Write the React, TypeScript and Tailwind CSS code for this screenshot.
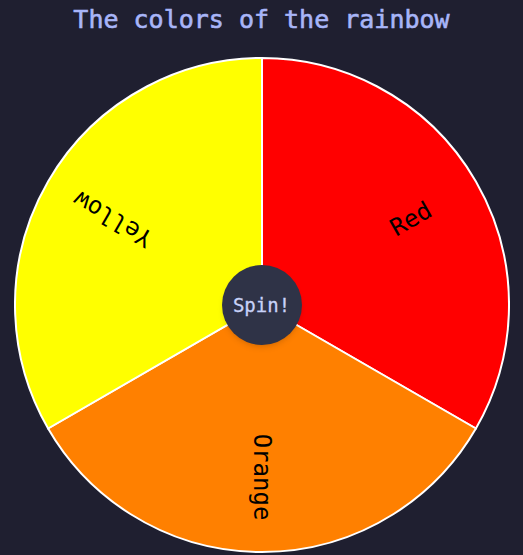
import React from "react";

type Slice = { label: string; color: string };

const slices: Slice[] = [
  { label: "Red", color: "#ff0000" },
  { label: "Orange", color: "#ff8000" },
  { label: "Yellow", color: "#ffff00" },
];

const SIZE = 496;
const C = SIZE / 2;
const R = 247;

function point(deg: number, r: number) {
  const a = (deg * Math.PI) / 180;
  return [C + r * Math.sin(a), C - r * Math.cos(a)];
}

function Wheel() {
  const step = 360 / slices.length;
  return (
    <svg width={SIZE} height={SIZE} viewBox={`0 0 ${SIZE} ${SIZE}`}>
      {slices.map((s, i) => {
        const [x1, y1] = point(i * step, R);
        const [x2, y2] = point((i + 1) * step, R);
        return (
          <path
            key={s.label}
            d={`M ${C} ${C} L ${x1} ${y1} A ${R} ${R} 0 0 1 ${x2} ${y2} Z`}
            fill={s.color}
            stroke="#ffffff"
            strokeWidth={2}
            strokeLinejoin="round"
          />
        );
      })}
      {slices.map((s, i) => {
        const mid = i * step + step / 2;
        return (
          <text
            key={s.label + "-t"}
            transform={`translate(${C} ${C}) rotate(${mid - 90}) translate(172 0)`}
            textAnchor="middle"
            dominantBaseline="central"
            fontFamily="'DejaVu Sans Mono', monospace"
            fontSize={24}
            fill="#000000"
          >
            {s.label}
          </text>
        );
      })}
    </svg>
  );
}

export default function App() {
  return (
    <div className="min-h-screen w-full bg-[#1f1f30] flex flex-col items-center font-['DejaVu_Sans_Mono',monospace]">
      <h1 className="pt-[4px] text-[25px] leading-8 font-normal text-[#a8b5f8] [-webkit-text-stroke:0.6px_#a8b5f8]">
        The colors of the rainbow
      </h1>
      <div className="relative mt-[21px] w-[496px] h-[496px]">
        <Wheel />
        <button className="absolute left-1/2 top-1/2 -translate-x-1/2 -translate-y-1/2 w-[80px] h-[80px] rounded-full bg-[#2f3347] text-[#c8d2f8] text-[19px] [-webkit-text-stroke:0.3px_#c8d2f8] flex items-center justify-center shadow-md">
          Spin!
        </button>
      </div>
    </div>
  );
}
